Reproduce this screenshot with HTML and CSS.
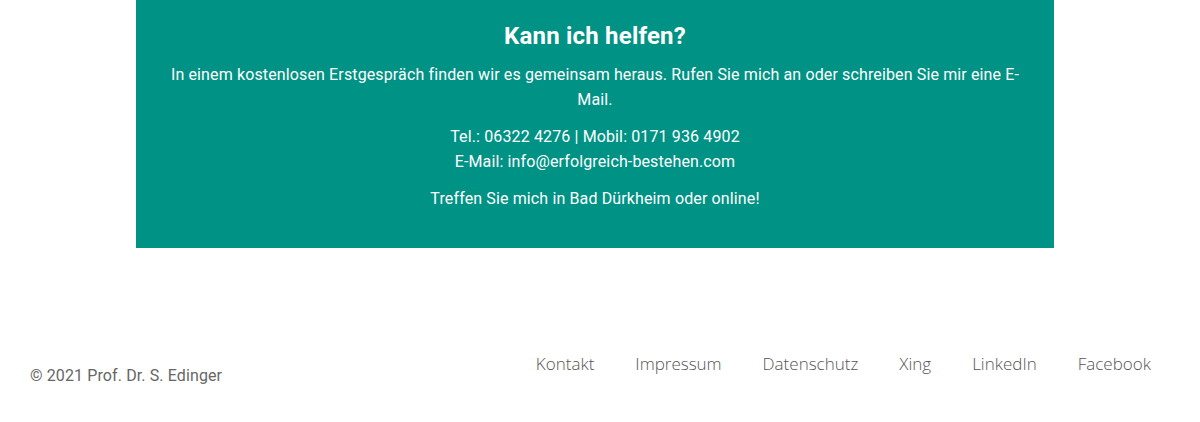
FILE: index.html
```html
<!DOCTYPE html>
<html lang="de">
<head>
<meta charset="utf-8">
<title>Kann ich helfen?</title>
<link rel="stylesheet" href="styles.css">
</head>
<body>
<main class="page">
  <section class="cta">
    <h2 class="cta-title">Kann ich helfen?</h2>
    <p class="cta-text">In einem kostenlosen Erstgespräch finden wir es gemeinsam heraus. Rufen Sie mich an oder schreiben Sie mir eine E-Mail.</p>
    <p class="cta-text">Tel.: 06322 4276 | Mobil: 0171 936 4902<br>E-Mail: info@erfolgreich-bestehen.com</p>
    <p class="cta-text">Treffen Sie mich in Bad Dürkheim oder online!</p>
  </section>
</main>
<footer class="footer">
  <div class="copyright">© 2021 Prof. Dr. S. Edinger</div>
  <nav class="footer-nav">
    <a class="footer-link" href="#">Kontakt</a>
    <a class="footer-link" href="#">Impressum</a>
    <a class="footer-link" href="#">Datenschutz</a>
    <a class="footer-link" href="#">Xing</a>
    <a class="footer-link" href="#">LinkedIn</a>
    <a class="footer-link" href="#">Facebook</a>
  </nav>
</footer>
</body>
</html>
```
FILE: styles.css
```css
html, body {
  margin: 0;
  padding: 0;
  background: #ffffff;
}

body {
  font-family: Roboto, "Liberation Sans", sans-serif;
  font-size: 16px;
}

.page {
  padding-left: 136px;
}

.cta {
  width: 918px;
  box-sizing: border-box;
  background: #009284;
  color: #ffffff;
  text-align: center;
  padding: 22px 30px 37px;
}

.cta-title {
  margin: 0 0 11px;
  font-size: 24px;
  font-weight: 700;
  line-height: 29px;
  letter-spacing: 0.2px;
}

.cta-text {
  margin: 0 0 12px;
  line-height: 25px;
  letter-spacing: 0.13px;
}

.cta-text:last-child {
  margin-bottom: 0;
}

.footer {
  display: flex;
  justify-content: space-between;
  align-items: flex-start;
  margin-top: 104px;
  padding: 0 30px;
}

.copyright {
  margin-top: 12px;
  color: #666666;
  line-height: 24px;
  letter-spacing: 0.11px;
}

.footer-nav {
  display: flex;
}

.footer-link {
  padding: 0 20.5px;
  font-family: "Open Sans", sans-serif;
  font-weight: 300;
  font-size: 17px;
  line-height: 24px;
  color: #555555;
  text-decoration: none;
}

.footer-link:last-child {
  padding-right: 19px;
}
```
